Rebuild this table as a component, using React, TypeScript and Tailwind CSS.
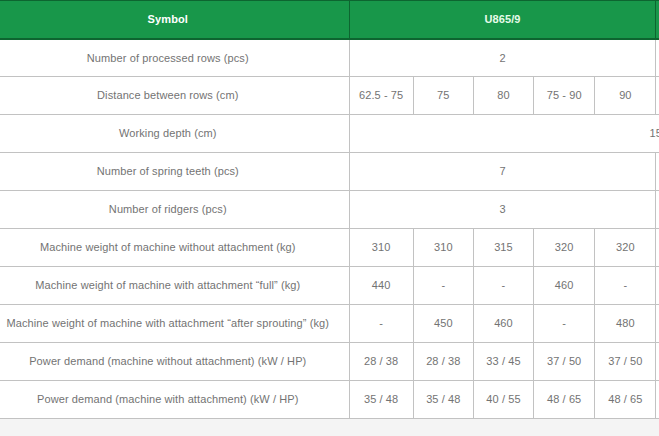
import React from "react";

const font = { fontFamily: '"Liberation Sans", Arial, sans-serif' };

type Cell = { v: string; span?: number };
type Row = { label: string; cells: Cell[] };

const rows: Row[] = [
  { label: "Number of processed rows (pcs)", cells: [{ v: "2", span: 5 }, { v: "", span: 5 }] },
  {
    label: "Distance between rows (cm)",
    cells: ["62.5 - 75", "75", "80", "75 - 90", "90", "", "", "", "", ""].map((v) => ({ v })),
  },
  { label: "Working depth (cm)", cells: [{ v: "15", span: 10 }] },
  { label: "Number of spring teeth (pcs)", cells: [{ v: "7", span: 5 }, { v: "", span: 5 }] },
  { label: "Number of ridgers (pcs)", cells: [{ v: "3", span: 5 }, { v: "", span: 5 }] },
  {
    label: "Machine weight of machine without attachment (kg)",
    cells: ["310", "310", "315", "320", "320", "", "", "", "", ""].map((v) => ({ v })),
  },
  {
    label: "Machine weight of machine with attachment \u201cfull\u201d (kg)",
    cells: ["440", "-", "-", "460", "-", "", "", "", "", ""].map((v) => ({ v })),
  },
  {
    label: "Machine weight of machine with attachment \u201cafter sprouting\u201d (kg)",
    cells: ["-", "450", "460", "-", "480", "", "", "", "", ""].map((v) => ({ v })),
  },
  {
    label: "Power demand (machine without attachment) (kW / HP)",
    cells: ["28 / 38", "28 / 38", "33 / 45", "37 / 50", "37 / 50", "", "", "", "", ""].map((v) => ({ v })),
  },
  {
    label: "Power demand (machine with attachment) (kW / HP)",
    cells: ["35 / 48", "35 / 48", "40 / 55", "48 / 65", "48 / 65", "", "", "", "", ""].map((v) => ({ v })),
  },
];

const subWidths = [64, 60, 60, 61, 61, 61, 61, 61, 61, 61];

export default function App() {
  return (
    <div className="w-[659px] h-[436px] overflow-hidden bg-[#f4f4f4]" style={font}>
      <table className="table-fixed border-collapse bg-white text-[11px] text-[#737373] w-[962px] tracking-[0.1px]">
        <colgroup>
          <col style={{ width: 348 }} />
          {subWidths.map((w, i) => (
            <col key={i} style={{ width: w }} />
          ))}
        </colgroup>
        <thead>
          <tr className="h-[38px] bg-[#18974a] border-t border-t-[#0d6530] border-b-2 border-b-[#0d6530]">
            <th className="font-bold text-white text-center p-0 pr-[13px]">Symbol</th>
            <th colSpan={5} className="font-bold text-[#e6fbe9] text-center p-0 border-l border-r border-[#0d6530]">
              U865/9
            </th>
            <th colSpan={5} className="p-0 border-l border-[#0d6530]"></th>
          </tr>
        </thead>
        <tbody>
          {rows.map((r, i) => (
            <tr key={i} className="h-[38px] border-b border-[#c2c2c2]">
              <td className="text-center p-0 pr-[13px] whitespace-nowrap">{r.label}</td>
              {r.cells.map((c, j) => (
                <td key={j} colSpan={c.span} className="text-center p-0 border-l border-[#c2c2c2] whitespace-nowrap">
                  {c.v}
                </td>
              ))}
            </tr>
          ))}
        </tbody>
      </table>
    </div>
  );
}
